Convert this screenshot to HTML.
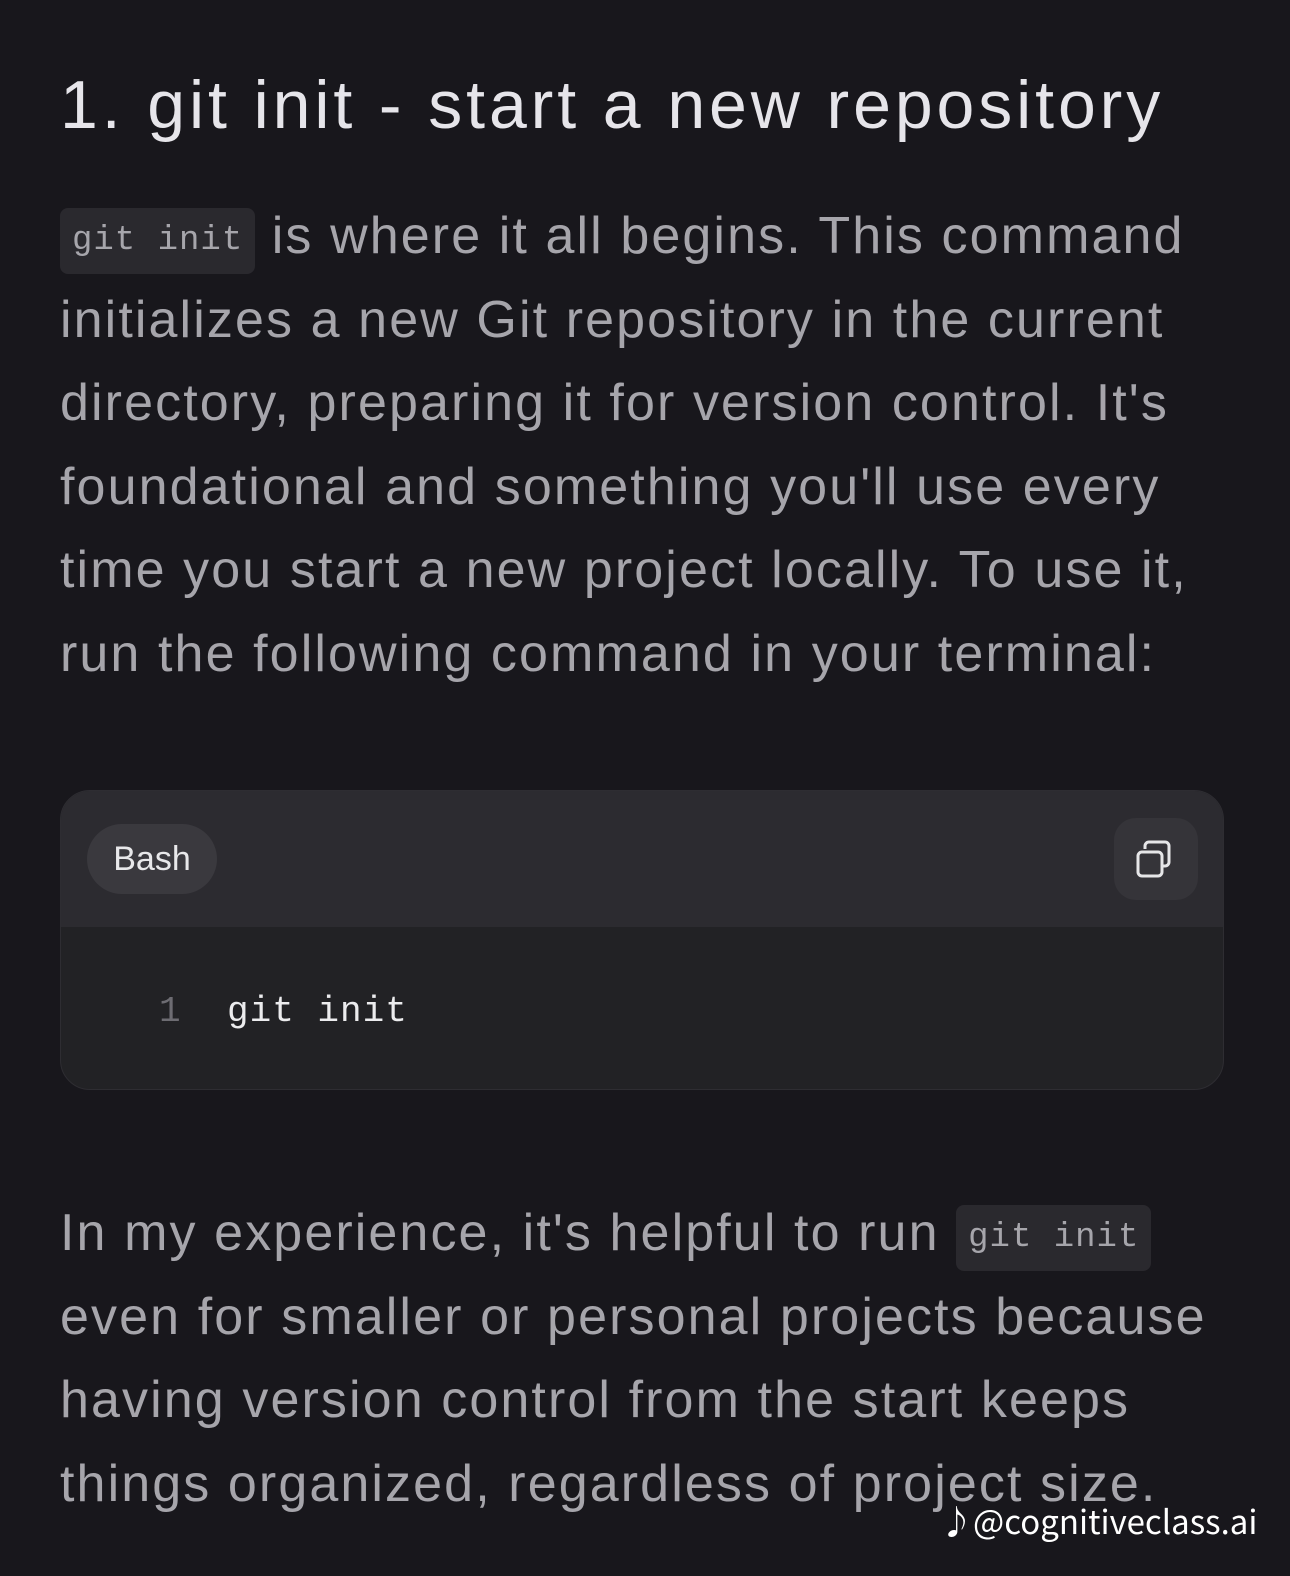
<!DOCTYPE html>
<html><head><meta charset="utf-8"><style>
html,body{margin:0;padding:0;background:#18171c;}
body{width:1290px;height:1576px;position:relative;overflow:hidden;font-family:"Liberation Sans",sans-serif;}
h1{position:absolute;left:60px;top:60px;margin:0;font-weight:400;font-size:68px;line-height:90px;color:#e6e5ea;white-space:nowrap;letter-spacing:3.9px;}
.p{position:absolute;left:60px;color:#a6a5ab;font-size:52px;line-height:83.6px;white-space:nowrap;letter-spacing:2.1px;}
code{font-family:"Liberation Mono",monospace;font-size:34px;line-height:1;background:#2a292e;border-radius:8px;padding:14px 12px 14px 12px;color:#a6a5ab;letter-spacing:1px;vertical-align:4px;}
.cb{position:absolute;left:60px;top:790px;width:1162px;height:298px;border-radius:30px;background:#222225;border:1px solid #2e2d32;overflow:hidden;}
.hd{height:136px;background:#2c2b30;position:relative;}
.pill{position:absolute;left:26px;top:33px;width:130px;height:70px;border-radius:35px;background:#3a393e;color:#e8e8ea;font-size:34px;line-height:70px;text-align:center;}
.cp{position:absolute;left:1053px;top:27px;width:84px;height:82px;border-radius:22px;background:#353439;}
.ln{position:absolute;left:98px;top:200px;font-family:"Liberation Mono",monospace;font-size:36px;color:#6d6c72;}
.cd{position:absolute;left:166px;top:200px;font-family:"Liberation Mono",monospace;font-size:36px;color:#ececee;letter-spacing:1px;}
.wm{position:absolute;left:940px;top:1496px;color:#fff;font-size:33px;white-space:nowrap;font-family:"Noto Sans CJK JP","Liberation Sans",sans-serif;}
</style></head><body>
<h1>1. git init - start a new repository</h1>
<div class="p" style="top:195px"><code>git init</code> is where it all begins. This command<br>initializes a new Git repository in the current<br>directory, preparing it for version control. It's<br>foundational and something you'll use every<br>time you start a new project locally. To use it,<br>run the following command in your terminal:</div>
<div class="cb"><div class="hd"><div class="pill">Bash</div><div class="cp"><svg width="84" height="82" viewBox="0 0 84 82"><rect x="24" y="34" width="24" height="24" rx="4" fill="none" stroke="#e6e6e8" stroke-width="3"/><path d="M31 31v-3a4 4 0 0 1 4-4h16a4 4 0 0 1 4 4v16a4 4 0 0 1-4 4h-3" fill="none" stroke="#e6e6e8" stroke-width="3"/></svg></div></div>
<div class="ln">1</div><div class="cd">git init</div></div>
<div class="p" style="top:1192px">In my experience, it's helpful to run <code>git init</code><br>even for smaller or personal projects because<br>having version control from the start keeps<br>things organized, regardless of project size.</div>
<div class="wm"><b>♪</b>@cognitiveclass.ai</div>
</body></html>
